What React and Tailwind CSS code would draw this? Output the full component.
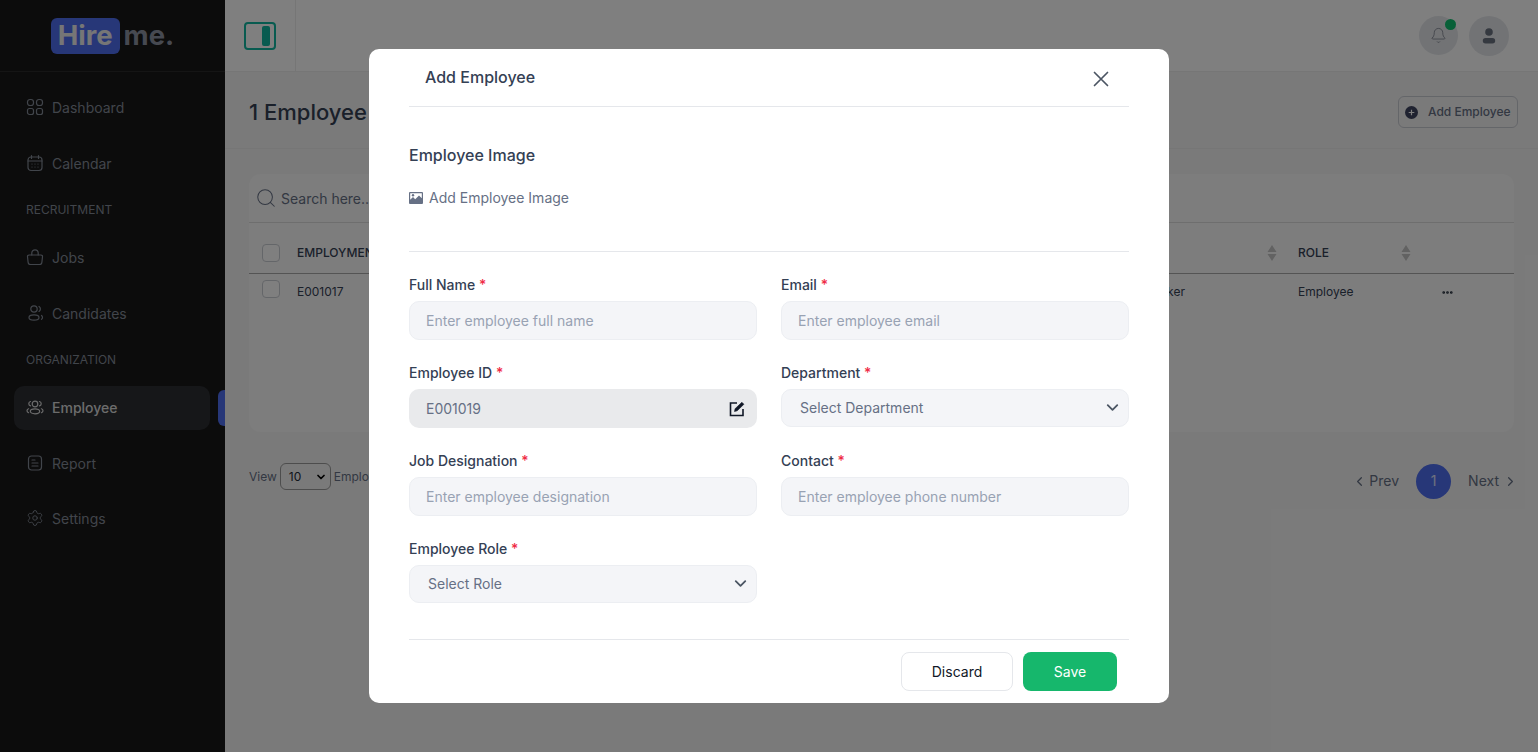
import React from "react";
import { ChevronDown, ChevronLeft, ChevronRight, Search, Bell, Settings, MoreHorizontal } from "lucide-react";

const Icon = ({ children }) => (
  <svg width="18" height="18" viewBox="0 0 18 18" fill="none" stroke="currentColor" strokeWidth="1.2" strokeLinecap="round" strokeLinejoin="round" className="shrink-0">{children}</svg>
);
const Dash = () => <Icon><rect x="1.500" y="1.500" width="6" height="6" rx="2.500" /><rect x="10.500" y="1.500" width="6" height="6" rx="2.500" /><rect x="1.500" y="10.500" width="6" height="6" rx="2" /><rect x="10.500" y="10.500" width="6" height="6" rx="2" /></Icon>;
const Cal = () => <Icon><rect x="2" y="3" width="14" height="13.500" rx="3" /><path d="M2 7h14M5.500 1.500v3M12.500 1.500v3M6 10h.01M9 10h.01M12 10h.01M6 13h.01M9 13h.01M12 13h.01" /></Icon>;
const Bag = () => <Icon><path d="M3 7h12a1.500 1.500 0 0 1 1.500 1.700l-.6 5.500A2.500 2.500 0 0 1 13.400 16.500H4.600a2.500 2.500 0 0 1-2.500-2.300l-.6-5.500A1.500 1.500 0 0 1 3 7z" /><path d="M5.800 7V5a3.200 3.200 0 0 1 6.400 0v2" /></Icon>;
const Cands = () => <Icon><circle cx="8" cy="5" r="3.200" /><ellipse cx="8" cy="13.500" rx="5" ry="2.600" /><path d="M13 2.500c1 .6 1.400 1.500 1.400 2.500s-.4 1.800-1.400 2.400M15.500 11.500c.8.6 1 1.200 1 2s-.3 1.300-1 1.800" /></Icon>;
const Emps = () => <Icon><circle cx="9" cy="6" r="2.800" /><ellipse cx="9" cy="13.300" rx="4.700" ry="2.500" /><path d="M4.500 3.500C3.400 3.800 2.800 4.700 2.800 5.700s.6 1.800 1.700 2.100M13.500 3.500c1.100.3 1.700 1.200 1.700 2.200s-.6 1.800-1.700 2.100M2.600 10.800c-1 .4-1.600 1.200-1.600 2s.5 1.500 1.600 1.900M15.400 10.800c1 .4 1.600 1.200 1.600 2s-.5 1.500-1.600 1.900" /></Icon>;
const Report = () => <Icon><rect x="2.500" y="2" width="13" height="14" rx="3" /><path d="M6 6h3M6 9h6M6 12h6" /></Icon>;

const Nav = ({ icon, label, active }) => (
  <div className={`flex h-[44px] items-center gap-[8px] rounded-[10px] pl-[12px] ${active ? "bg-[#2c2e33] pb-[2px] text-[#d9d9d9] font-medium" : "text-[#838a96]"}`}>
    {icon}
    <span className="text-[14px]">{label}</span>
  </div>
);
const Section = ({ children, last }) => <div className={`mt-[17px] pl-[12px] text-[12px] leading-[16px] text-[#838a96] ${last ? "mb-[18px]" : "mb-[17px]"}`}>{children}</div>;

const Sort = () => (
  <svg width="10" height="18" viewBox="0 0 10 18" className="fill-[#c4c4c4] shrink-0"><path d="M5 1l4.500 7h-9zM5 17L.5 10h9z" /></svg>
);

const Label = ({ children }) => (
  <label className="block text-[14px] leading-[20px] font-medium text-[#344054] mb-[6px]">
    {children} <span className="text-[#ef2b45]">*</span>
  </label>
);
const TextField = ({ label, placeholder }) => (
  <div>
    <Label>{label}</Label>
    <div className="flex items-center h-[39px] rounded-[10px] border border-[#eceef2] bg-[#f4f5f8] pl-[16px] text-[14px] text-[#98a2b3]">{placeholder}</div>
  </div>
);
const SelectField = ({ label, placeholder }) => (
  <div>
    <Label>{label}</Label>
    <div className="flex items-center justify-between h-[38px] rounded-[10px] border border-[#eceef2] bg-[#f4f5f8] pb-[2px] pl-[18px] pr-[6px] text-[14px] text-[#667085]">
      {placeholder}
      <ChevronDown size={19} strokeWidth={2.300} className="text-[#4b5563]" />
    </div>
  </div>
);

export default function App() {
  return (
    <div className="relative flex h-[752px] w-[1538px] overflow-hidden bg-[#f5f5f5] font-['Inter',sans-serif]">
      <aside className="w-[225px] shrink-0 bg-[#181818]">
        <div className="flex h-[72px] items-center justify-center gap-[4px] border-b border-[#2a2a2a]">
          <span className="rounded-[6px] bg-[#4f6ef0] px-[7px] h-[36px] flex items-center text-[27.500px] font-bold text-[#ececec]">Hire</span>
          <span className="text-[27.500px] font-bold text-[#8c93a3]">me.</span>
        </div>
        <div className="relative pl-[14px] pr-[15px] pt-[13px]">
          <Nav icon={<Dash />} label="Dashboard" />
          <div className="mt-[12px]"><Nav icon={<Cal />} label="Calendar" /></div>
          <Section>RECRUITMENT</Section>
          <Nav icon={<Bag />} label="Jobs" />
          <div className="mt-[12px]"><Nav icon={<Cands />} label="Candidates" /></div>
          <Section last>ORGANIZATION</Section>
          <Nav icon={<Emps />} label="Employee" active />
          <div className="mt-[11px]"><Nav icon={<Report />} label="Report" /></div>
          <div className="mt-[11px]"><Nav icon={<Settings size={18} strokeWidth={1.2} />} label="Settings" /></div>
          <div className="absolute left-[218px] top-[318px] h-[36px] w-[7px] rounded-l-[6px] bg-[#4f6ef0]" />
        </div>
      </aside>

      <main className="flex-1 min-w-0">
        <header className="flex h-[72px] items-stretch justify-between border-b border-[#ececec] bg-white">
          <div className="flex w-[71px] items-center justify-center border-r border-[#ececec]">
            <div className="flex h-[28px] w-[32px] items-center justify-end rounded-[4px] border-2 border-[#10b6a0] pr-[4px]">
              <div className="h-[20px] w-[8px] rounded-[2px] bg-[#10b6a0]" />
            </div>
          </div>
          <div className="flex items-center gap-[11px] pr-[29px]">
            <div className="relative flex h-[39px] w-[39px] items-center justify-center rounded-full bg-[#e5e7eb]">
              <Bell size={17} strokeWidth={1} className="text-[#6b7280]" />
              <span className="absolute right-[2px] top-[3px] h-[11px] w-[11px] rounded-full bg-[#10c070]" />
            </div>
            <div className="flex h-[40px] w-[40px] items-center justify-center rounded-full bg-[#e5e7eb]">
              <svg width="14" height="16" viewBox="0 0 14 16" className="fill-[#6b7280]"><circle cx="7" cy="4" r="3.800" /><rect x="0.800" y="10" width="12.400" height="5.500" rx="2.700" /></svg>
            </div>
          </div>
        </header>

        <div className="flex h-[77px] items-center justify-between border-b border-[#ececec] pl-[24px] pr-[20px] pt-[4px]">
          <h1 className="text-[22px] font-medium text-[#344054]">1 Employee</h1>
          <div className="flex h-[32px] w-[120px] items-center gap-[10px] rounded-[6px] border border-[#c9ccd3] pl-[6px] text-[12px] font-medium text-[#667085]">
            <svg width="13" height="13" viewBox="0 0 13 13"><circle cx="6.500" cy="6.500" r="6.500" fill="#3f4560" /><path d="M6.500 3.700v5.600M3.700 6.500h5.600" stroke="#fff" strokeWidth="1.2" /></svg>
            Add Employee
          </div>
        </div>

        <section className="ml-[24px] mr-[24px] mt-[25px] h-[258px] rounded-[12px] bg-[#fbfbfb]">
          <div className="flex h-[49px] items-center gap-[4px] border-b border-[#dcdcdc] pl-[6px] text-[14px] text-[#667085]">
            <Search size={22} strokeWidth={1.1} />
            Search here...
          </div>
          <div className="flex h-[51px] items-center border-b border-[#a9a9a9] pt-[10px] text-[12px] font-medium text-[#344054]">
            <span className="ml-[13px] h-[18px] w-[18px] rounded-[4px] border border-[#c9ccd3] bg-white" />
            <span className="ml-[17px] flex w-[1001px] justify-between pr-[21px]">EMPLOYMENT ID<Sort /></span>
            <span className="w-[103px]">ROLE</span>
            <Sort />
          </div>
          <div className="flex h-[36px] items-center text-[12px] text-[#344054]">
            <span className="ml-[13px] -mt-[6px] h-[18px] w-[18px] rounded-[4px] border border-[#c9ccd3] bg-white" />
            <span className="ml-[17px] w-[847px]">E001017</span>
            <span className="w-[154px]">Worker</span>
            <span className="w-[143px]">Employee</span>
            <MoreHorizontal size={13} strokeWidth={3} className="text-[#1f2937]" />
          </div>
        </section>

        <div className="ml-[24px] mr-[24px] mt-[31px] flex items-start justify-between">
          <div className="flex items-center gap-[3px] text-[12px] text-[#667085]">
            View
            <div className="flex h-[27px] w-[51px] items-center justify-between rounded-[6px] border border-[#9a9a9a] pl-[8px] pr-[3px] text-[12px] text-[#1f2937]">
              10
              <ChevronDown size={12} strokeWidth={3.500} className="text-black" />
            </div>
            Employee per page
          </div>
          <div className="mt-[1px] -mr-[4px] flex items-center text-[14px] text-[#667085]">
            <ChevronLeft size={15} />
            <span className="ml-[2px] pb-[2px]">Prev</span>
            <span className="ml-[17px] flex h-[35px] w-[35px] items-center justify-center rounded-full bg-[#4f6ef0] pb-[2px] text-white/80">1</span>
            <span className="ml-[17px] pb-[2px]">Next</span>
            <ChevronRight size={15} className="ml-[4px]" />
          </div>
        </div>
      </main>

      <div className="absolute inset-0 bg-black/50" />

      <div className="absolute left-[369px] top-[49px] h-[654px] w-[800px] rounded-[10px] bg-white px-[40px]">
        <div className="flex h-[58px] items-start justify-between border-b border-[#e5e7eb] pl-[16px] pr-[19px] pt-[17px]">
          <h2 className="text-[16px] leading-[22px] font-medium text-[#344054]">Add Employee</h2>
          <svg width="18" height="18" viewBox="0 0 18 18" fill="none" stroke="#4b5563" strokeWidth="1.700" strokeLinecap="round" className="mt-[4px]"><path d="M2.500 2.500l13 13M15.500 2.500l-13 13" /></svg>
        </div>
        <div className="h-[145px] border-b border-[#e5e7eb] pt-[37px]">
          <h3 className="text-[16px] leading-[22px] font-medium text-[#344054]">Employee Image</h3>
          <div className="mt-[22px] flex items-center gap-[6px] text-[14px] leading-[20px] text-[#667085]">
            <svg width="14" height="12" viewBox="0 0 14 12"><path fillRule="evenodd" fill="#667085" d="M1 0h12a1 1 0 0 1 1 1v10a1 1 0 0 1-1 1H1a1 1 0 0 1-1-1V1a1 1 0 0 1 1-1zm.2 1.200v6.600L4 5l2.200 2.200L10 3.400l2.800 2.800V1.200z" /><circle cx="4" cy="3.200" r="1.200" fill="#667085" /></svg>
            Add Employee Image
          </div>
        </div>
        <div className="mt-[23px] grid grid-cols-2 gap-x-[24px] gap-y-[23px]">
          <TextField label="Full Name" placeholder="Enter employee full name" />
          <TextField label="Email" placeholder="Enter employee email" />
          <div>
            <Label>Employee ID</Label>
            <div className="flex items-center justify-between h-[39px] rounded-[10px] bg-[#e9eaec] pl-[17px] pr-[11px] text-[14px] text-[#667085]">
              E001019
              <svg width="18" height="18" viewBox="0 0 18 18" fill="none" stroke="#111827" strokeWidth="1.600"><path d="M9 3H2.500v12.500H15V9" /><path d="M6.500 11.500l.6-2.800 6.800-6.400 2 2-6.700 6.500z" fill="#111827" strokeWidth="0.600" /></svg>
            </div>
          </div>
          <SelectField label="Department" placeholder="Select Department" />
          <TextField label="Job Designation" placeholder="Enter employee designation" />
          <TextField label="Contact" placeholder="Enter employee phone number" />
          <SelectField label="Employee Role" placeholder="Select Role" />
        </div>
        <div className="mt-[36px] flex justify-end gap-[10px] border-t border-[#e5e7eb] pt-[12px] pr-[12px]">
          <button className="h-[39px] w-[112px] rounded-[8px] border border-[#e5e7eb] bg-white text-[14px] text-[#111827]">Discard</button>
          <button className="h-[39px] w-[94px] rounded-[8px] bg-[#16b76c] text-[14px] text-white">Save</button>
        </div>
      </div>
    </div>
  );
}
